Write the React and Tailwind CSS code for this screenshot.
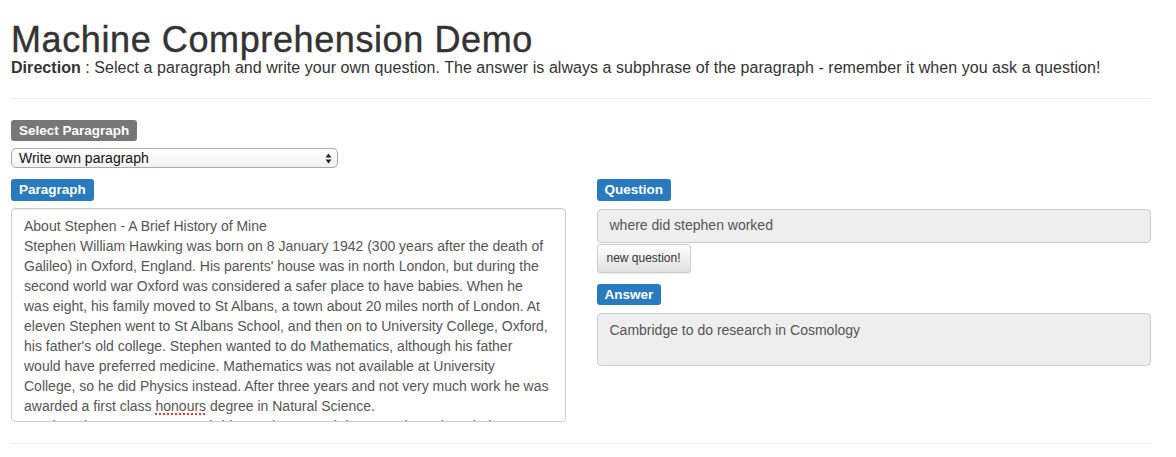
import React from 'react'

const FONT = { fontFamily: '"Liberation Sans", Arial, Helvetica, sans-serif' }

const LINES = [
  'About Stephen - A Brief History of Mine',
  'Stephen William Hawking was born on 8 January 1942 (300 years after the death of',
  "Galileo) in Oxford, England. His parents' house was in north London, but during the",
  'second world war Oxford was considered a safer place to have babies. When he',
  'was eight, his family moved to St Albans, a town about 20 miles north of London. At',
  'eleven Stephen went to St Albans School, and then on to University College, Oxford,',
  "his father's old college. Stephen wanted to do Mathematics, although his father",
  'would have preferred medicine. Mathematics was not available at University',
  'College, so he did Physics instead. After three years and not very much work he was',
  null,
  'Stephen then went on to Cambridge to do research in Cosmology, there being no one',
]

function Label({ children, gray, className = '' }) {
  return (
    <span
      className={`block text-[13.5px] font-bold leading-none text-white px-[8px] pt-[4px] pb-[4px] rounded-[3px] ${
        gray ? 'bg-[#777777]' : 'bg-[#2a7abf]'
      } ${className}`}
    >
      {children}
    </span>
  )
}

export default function App() {
  return (
    <div className="bg-white min-h-[457px] text-[#333333]" style={FONT}>
      <div className="w-[1140px] ml-[11px]">
        {/* Header */}
        <h1 className="text-[36px] leading-[1.1] mt-[20px] font-normal tracking-[0.6px] [-webkit-text-stroke:0.4px_#333333]">
          Machine Comprehension Demo
        </h1>
        <p className="text-[16px] leading-[20px] -mt-[2px] tracking-[0.05px]">
          <b>Direction</b> : Select a paragraph and write your own question. The answer is always a subphrase of the paragraph - remember it when you ask a question!
        </p>
        <hr className="border-0 border-t border-[#eeeeee] mt-[20px] mb-[21px]" />

        {/* Select paragraph */}
        <div className="flex flex-col items-start">
          <Label gray>Select Paragraph</Label>
          <div className="mt-[7px] w-[327px] h-[20px] border border-[#a9a9a9] rounded-[5px] bg-gradient-to-b from-[#ffffff] to-[#f1f1f1] flex items-center justify-between pl-[7px] pr-[5px] text-[14px] text-[#111]">
            <span>Write own paragraph</span>
            <svg width="7" height="11" viewBox="0 0 7 11">
              <path d="M3.5 0.5 L6.5 4.5 L0.5 4.5 Z" fill="#222" />
              <path d="M3.5 10.5 L6.5 6.5 L0.5 6.5 Z" fill="#222" />
            </svg>
          </div>
        </div>

        <div className="grid grid-cols-2 gap-[31px] mt-[11px]">
          {/* Left column */}
          <div className="flex flex-col items-start">
            <Label>Paragraph</Label>
            <div className="mt-[7px] w-full h-[214px] overflow-hidden border border-[#cccccc] rounded-[4px] px-[12px] pt-[7px] text-[14px] leading-[20px] text-[#555555] shadow-[inset_0_1px_1px_rgba(0,0,0,0.075)]">
              {LINES.map((l, i) =>
                l === null ? (
                  <div key={i} className="whitespace-nowrap">
                    awarded a first class{' '}
                    <span className="underline decoration-dotted decoration-[#e33] decoration-2 underline-offset-[3px]">honours</span>{' '}
                    degree in Natural Science.
                  </div>
                ) : (
                  <div key={i} className="whitespace-nowrap">{l}</div>
                )
              )}
            </div>
          </div>

          {/* Right column */}
          <div className="flex flex-col items-start">
            <Label>Question</Label>
            <div className="mt-[8px] w-full h-[34px] border border-[#cccccc] rounded-[4px] bg-[#eeeeee] px-[12px] flex items-center text-[14px] text-[#555555]">
              where did stephen worked
            </div>
            <button className="mt-[1px] h-[29px] px-[9px] text-[12px] text-[#333] border border-[#cccccc] rounded-[3px] bg-gradient-to-b from-[#ffffff] to-[#e0e0e0] shadow-[0_1px_1px_rgba(0,0,0,0.08)]">
              new question!
            </button>
            <Label className="mt-[11px]">Answer</Label>
            <div className="mt-[8px] w-full h-[53px] border border-[#cccccc] rounded-[4px] bg-[#eeeeee] px-[12px] pt-[6px] text-[14px] leading-[20px] text-[#555555]">
              Cambridge to do research in Cosmology
            </div>
          </div>
        </div>

        <hr className="border-0 border-t border-[#eeeeee] mt-[21px]" />
      </div>
    </div>
  )
}
